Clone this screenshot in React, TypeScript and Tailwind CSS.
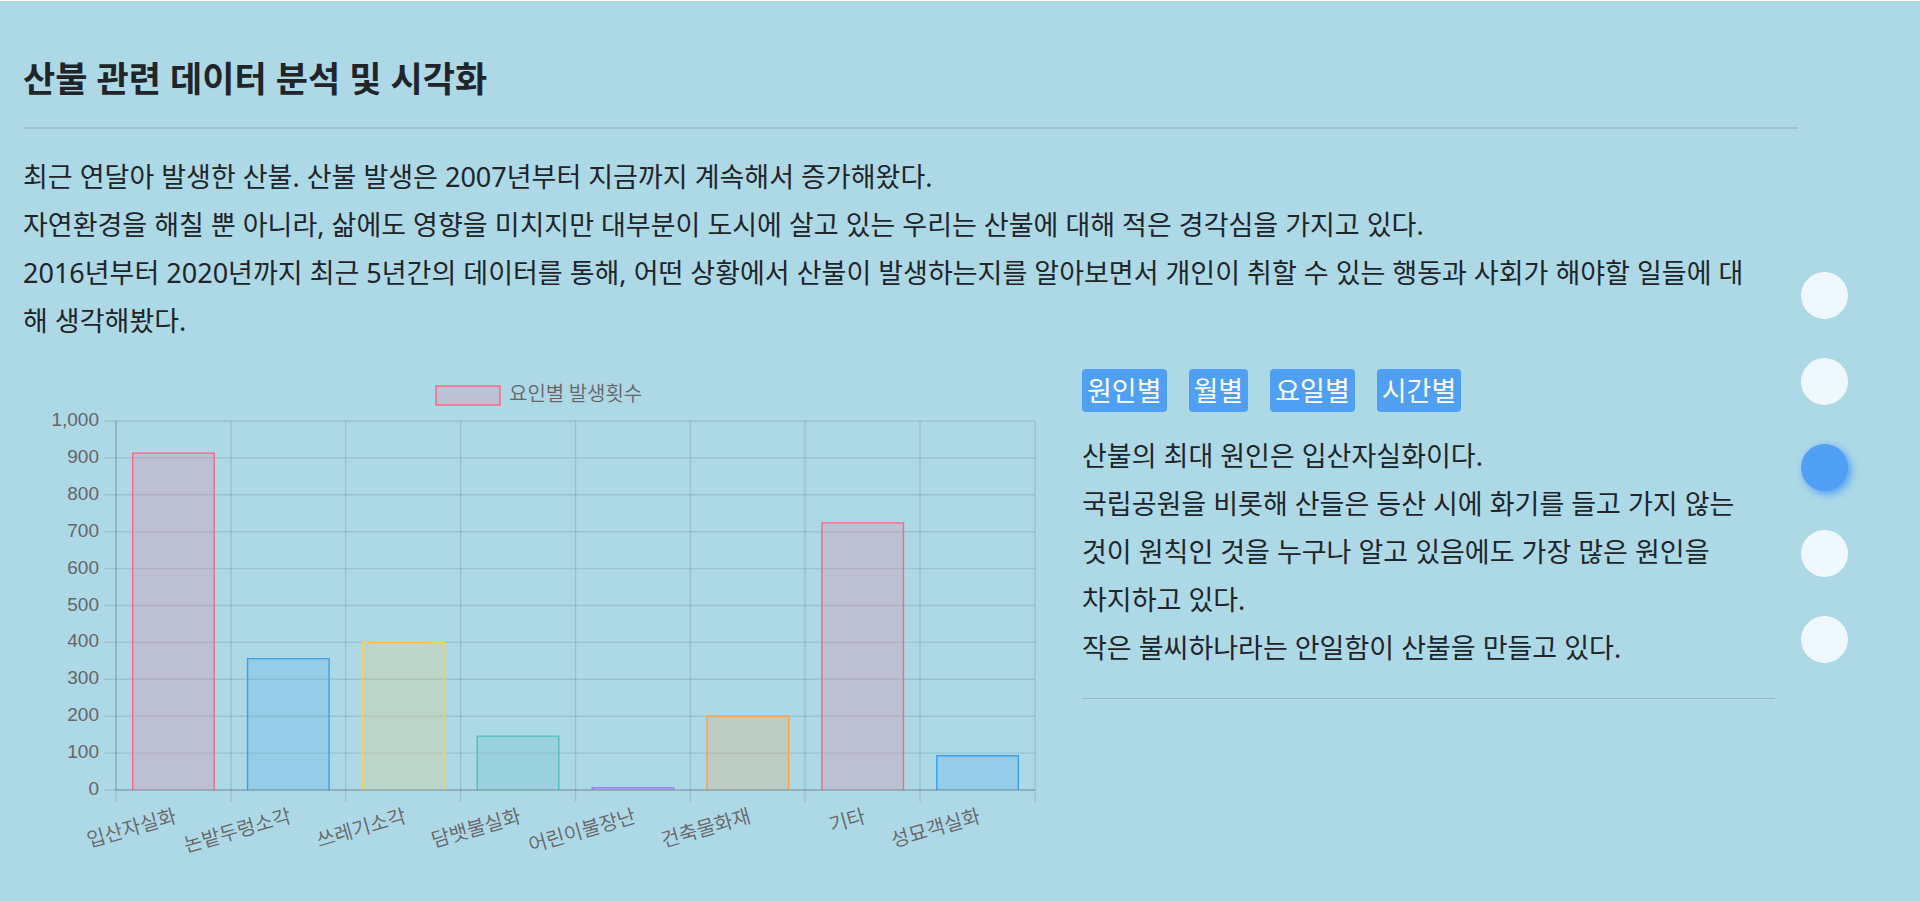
import React, { useState } from "react";

type Tone = { fill: string; stroke: string };

const RED: Tone = { fill: "rgba(255,99,132,0.2)", stroke: "rgb(255,99,132)" };
const BLUE: Tone = { fill: "rgba(54,162,235,0.2)", stroke: "rgb(54,162,235)" };
const YELLOW: Tone = { fill: "rgba(255,206,86,0.2)", stroke: "rgb(255,206,86)" };
const TEAL: Tone = { fill: "rgba(75,192,192,0.2)", stroke: "rgb(75,192,192)" };
const PURPLE: Tone = { fill: "rgba(153,102,255,0.2)", stroke: "rgba(153,102,255,0.75)" };
const ORANGE: Tone = { fill: "rgba(255,159,64,0.2)", stroke: "rgb(255,159,64)" };

const CAUSES: { label: string; count: number; tone: Tone }[] = [
  { label: "입산자실화", count: 913, tone: RED },
  { label: "논밭두렁소각", count: 356, tone: BLUE },
  { label: "쓰레기소각", count: 400, tone: YELLOW },
  { label: "담뱃불실화", count: 146, tone: TEAL },
  { label: "어린이불장난", count: 6, tone: PURPLE },
  { label: "건축물화재", count: 200, tone: ORANGE },
  { label: "기타", count: 724, tone: RED },
  { label: "성묘객실화", count: 93, tone: BLUE },
];

const TICKS = [0, 100, 200, 300, 400, 500, 600, 700, 800, 900, 1000];

// Plot area inside the chart's view box
const LEFT = 93;
const RIGHT = 1012;
const TOP = 52;
const BOTTOM = 421;
const STEP = (RIGHT - LEFT) / CAUSES.length;
const yOf = (n: number) => BOTTOM - ((BOTTOM - TOP) * n) / 1000;

function CauseChart() {
  return (
    <svg
      viewBox="0 0 1013 500"
      className="block h-auto w-full"
      role="img"
      aria-label="요인별 발생횟수"
    >
      <g className="font-['Noto_Sans_CJK_KR',sans-serif] text-[20px] font-[350]" fill="#666">
        <rect x="413" y="17" width="64" height="19" fill={RED.fill} stroke={RED.stroke} strokeWidth="1.4" />
        <text x="486" y="32">요인별 발생횟수</text>
        {CAUSES.map((c, i) => (
          <text
            key={c.label}
            textAnchor="end"
            transform={`translate(${LEFT + STEP * (i + 0.5)} 446) rotate(-16)`}
            x="2"
            y="8"
          >
            {c.label}
          </text>
        ))}
      </g>

      <g className="font-['Liberation_Sans',sans-serif] text-[19px]" fill="#666" textAnchor="end">
        {TICKS.map((t) => (
          <text key={t} x="76" y={yOf(t) + 5}>
            {t.toLocaleString("en-US")}
          </text>
        ))}
      </g>

      <g stroke="#000" strokeWidth="1.4">
        {TICKS.map((t) => (
          <line key={t} x1={LEFT - 12} x2={RIGHT} y1={yOf(t)} y2={yOf(t)} strokeOpacity="0.1" />
        ))}
        {[...CAUSES, null].map((_, i) => (
          <line
            key={i}
            x1={LEFT + STEP * i}
            x2={LEFT + STEP * i}
            y1={TOP}
            y2={BOTTOM + 12}
            strokeOpacity="0.1"
          />
        ))}
        <line x1={LEFT} x2={LEFT} y1={TOP} y2={BOTTOM} strokeOpacity="0.12" />
      </g>

      {CAUSES.map((c, i) => {
        const x1 = LEFT + STEP * (i + 0.145);
        const x2 = LEFT + STEP * (i + 0.855);
        const y = yOf(c.count);
        return (
          <g key={c.label}>
            <rect x={x1} y={y} width={x2 - x1} height={BOTTOM - y} fill={c.tone.fill} />
            <path
              d={`M${x1} ${BOTTOM}V${y}H${x2}V${BOTTOM}`}
              fill="none"
              stroke={c.tone.stroke}
              strokeWidth="1.4"
            />
          </g>
        );
      })}
      <line x1={LEFT} x2={RIGHT} y1={BOTTOM} y2={BOTTOM} stroke="#000" strokeWidth="1.4" strokeOpacity="0.15" />
    </svg>
  );
}

const FILTERS = ["원인별", "월별", "요일별", "시간별"];
const SECTIONS = [1, 2, 3, 4, 5];

export default function App() {
  const [section, setSection] = useState(3);

  return (
    <div className="flex min-h-screen gap-[3px] border-t border-white bg-[#add8e6] pl-[23px] pr-[72px] font-['Noto_Sans','Noto_Sans_CJK_KR',sans-serif] text-[27px] leading-[48px] text-[#212529]">
      <main className="min-w-0 flex-1 pt-[54px]">
        <h1 className="text-[35px] font-bold leading-[48px]">산불 관련 데이터 분석 및 시각화</h1>
        <hr className="mb-6 mt-6 border-t-2 border-black/10" />
        <p>
          최근 연달아 발생한 산불. 산불 발생은 2007년부터 지금까지 계속해서 증가해왔다.
          <br />
          자연환경을 해칠 뿐 아니라, 삶에도 영향을 미치지만 대부분이 도시에 살고 있는 우리는 산불에 대해 적은 경각심을 가지고 있다.
          <br />
          2016년부터 2020년까지 최근 5년간의 데이터를 통해, 어떤 상황에서 산불이 발생하는지를 알아보면서 개인이 취할 수 있는 행동과 사회가 해야할 일들에 대
          <br />
          해 생각해봤다.
        </p>

        <div className="mt-6 grid grid-cols-[1013fr_693fr] gap-[46px] pr-[23px]">
          <CauseChart />
          <section>
            <div className="flex gap-[22px]">
              {FILTERS.map((name) => (
                <button
                  key={name}
                  type="button"
                  className="h-[43px] whitespace-nowrap rounded-[4px] bg-[#4f9ff5] px-[5px] text-[27px] leading-[43px] text-white"
                >
                  {name}
                </button>
              ))}
            </div>
            <p className="mt-5">
              산불의 최대 원인은 입산자실화이다.
              <br />
              국립공원을 비롯해 산들은 등산 시에 화기를 들고 가지 않는
              <br />
              것이 원칙인 것을 누구나 알고 있음에도 가장 많은 원인을
              <br />
              차지하고 있다.
              <br />
              작은 불씨하나라는 안일함이 산불을 만들고 있다.
            </p>
            <hr className="mt-[26px] border-t border-black/15" />
          </section>
        </div>
      </main>

      <nav aria-label="페이지 구역" className="flex flex-col gap-[39px] pt-[271px]">
        {SECTIONS.map((n) => (
          <a
            key={n}
            href={`#section-${n}`}
            aria-label={`${n}번째 구역`}
            aria-current={n === section ? "true" : undefined}
            onClick={() => setSection(n)}
            className={
              n === section
                ? "block size-[47px] rounded-full bg-[#4f9ff5] shadow-[3px_3px_8px_#4f9ff5]"
                : "block size-[47px] rounded-full bg-[#f0f8ff]"
            }
          />
        ))}
      </nav>
    </div>
  );
}
